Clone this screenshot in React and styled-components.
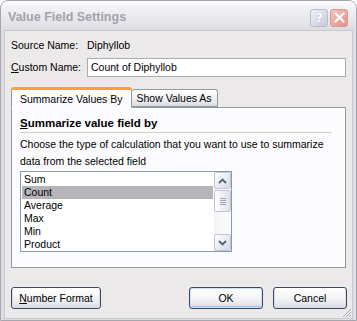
import React from "react";
import styled, { createGlobalStyle } from "styled-components";

const GlobalStyle = createGlobalStyle`
  html, body {
    margin: 0;
    padding: 0;
    background: #ffffff;
  }
  body {
    font-family: Tahoma, "Liberation Sans", Arial, sans-serif;
    font-size: 10.5px;
    color: #000;
  }
`;

const items = ["Sum", "Count", "Average", "Max", "Min", "Product"];

const App = () => {
  return (
    <>
      <GlobalStyle />
      <Window>
        <TitleBar>
          <Title>Value Field Settings</Title>
          <CaptionButtons>
            <CaptionButton>?</CaptionButton>
            <CaptionButton $close>
              <svg width="11" height="11" viewBox="0 0 11 11">
                <path d="M1.5 1.5 L9.5 9.5 M9.5 1.5 L1.5 9.5" stroke="#fff" strokeWidth="2.2" strokeLinecap="round" />
              </svg>
            </CaptionButton>
          </CaptionButtons>
        </TitleBar>
        <Body>
          <Row>
            <Label>Source Name:</Label>
            <Value>Diphyllob</Value>
          </Row>
          <Row>
            <Label><u>C</u>ustom Name:</Label>
            <Input>Count of Diphyllob</Input>
          </Row>
          <Tabs>
            <Tab $active>Summarize Values By</Tab>
            <Tab>Show Values As</Tab>
          </Tabs>
          <Panel>
            <Heading><u>S</u>ummarize value field by</Heading>
            <Description>
              Choose the type of calculation that you want to use to summarize
              data from the selected field
            </Description>
            <ListBox>
              <List>
                {items.map((it) => (
                  <Item key={it} $selected={it === "Count"}>{it}</Item>
                ))}
              </List>
              <ScrollBar>
                <ScrollButton>
                  <svg width="9" height="6" viewBox="0 0 9 6">
                    <path d="M1 5 L4.5 1.5 L8 5" stroke="#4d6185" strokeWidth="1.8" fill="none" />
                  </svg>
                </ScrollButton>
                <Track>
                  <Thumb>
                    <GripLine />
                    <GripLine />
                    <GripLine />
                    <GripLine />
                  </Thumb>
                </Track>
                <ScrollButton>
                  <svg width="9" height="6" viewBox="0 0 9 6">
                    <path d="M1 1 L4.5 4.5 L8 1" stroke="#4d6185" strokeWidth="1.8" fill="none" />
                  </svg>
                </ScrollButton>
              </ScrollBar>
            </ListBox>
          </Panel>
          <Footer>
            <Button $width="90px"><u>N</u>umber Format</Button>
            <Spacer />
            <Button $width="74px" $default>OK</Button>
            <Button $width="74px">Cancel</Button>
          </Footer>
          <Grip>
            <svg width="12" height="12" viewBox="0 0 12 12">
              <path d="M11 3 L3 11 M11 6 L6 11 M11 9 L9 11" stroke="#a8a8b0" strokeWidth="1" />
            </svg>
          </Grip>
        </Body>
      </Window>
    </>
  );
};

const Window = styled.div`
  width: 357px;
  height: 321px;
  box-sizing: border-box;
  display: flex;
  flex-direction: column;
  border: 1px solid #a7a6ae;
  border-radius: 8px 8px 0 0;
  background: #dedde3;
  overflow: hidden;
`;

const TitleBar = styled.div`
  height: 29px;
  flex-shrink: 0;
  display: flex;
  align-items: center;
  padding: 0 8px 0 7px;
  background: linear-gradient(#fdfdfe 0%, #f1f1f4 25%, #e6e6ea 70%, #dcdce1 100%);
`;

const Title = styled.div`
  flex: 1;
  font-family: "Liberation Sans", Arial, sans-serif;
  font-weight: bold;
  font-size: 12.5px;
  color: #a3a3ab;
  margin-top: 2px;
`;

const CaptionButtons = styled.div`
  display: flex;
  gap: 2px;
  margin-top: 4px;
`;

const CaptionButton = styled.div`
  width: 18px;
  height: 18px;
  box-sizing: border-box;
  border-radius: 3px;
  display: flex;
  align-items: center;
  justify-content: center;
  font-family: "DejaVu Sans", sans-serif;
  font-weight: bold;
  font-size: 13px;
  color: #fff;
  border: 1px solid ${(p) => (p.$close ? "#d59a95" : "#b9bccb")};
  background: ${(p) =>
    p.$close
      ? "linear-gradient(135deg, #f1c3bd, #e2928a)"
      : "linear-gradient(135deg, #f0f1f6, #c6c9d8)"};
  text-shadow: 0 0 1px #9ea2b8;
`;

const Body = styled.div`
  flex: 1;
  position: relative;
  margin: 0 3px 1px 3px;
  border: 1px solid #c9c8cd;
  background: #ece9ea;
  display: flex;
  flex-direction: column;
  padding: 3px 5px 0 6px;
`;

const Row = styled.div`
  display: flex;
  align-items: center;
  height: 22px;
`;

const Label = styled.div`
  width: 76px;
`;

const Value = styled.div``;

const Input = styled.div`
  flex: 1;
  height: 19px;
  box-sizing: border-box;
  border: 1px solid #a5acb5;
  background: #fff;
  padding: 0 3px;
  display: flex;
  align-items: center;
  margin-right: 1px;
`;

const Tabs = styled.div`
  display: flex;
  align-items: flex-end;
  margin-top: 9px;
  height: 21px;
  position: relative;
  z-index: 2;
  margin-bottom: -1px;
`;

const Tab = styled.div`
  box-sizing: border-box;
  height: ${(p) => (p.$active ? "21px" : "18px")};
  padding: 0 ${(p) => (p.$active ? "8px" : "5px")};
  display: flex;
  align-items: center;
  border: 1px solid #919b9c;
  border-bottom: ${(p) => (p.$active ? "1px solid #fcfcfe" : "1px solid #919b9c")};
  border-left: ${(p) => (p.$active ? "1px solid #919b9c" : "none")};
  border-top: ${(p) => (p.$active ? "3px solid #f2a33a" : "1px solid #919b9c")};
  border-radius: 3px 3px 0 0;
  background: ${(p) =>
    p.$active ? "#fcfcfe" : "linear-gradient(#ffffff, #ebebf0 70%, #d9d9e2)"};
  margin-bottom: ${(p) => (p.$active ? "0" : "1px")};
`;

const Panel = styled.div`
  box-sizing: border-box;
  height: 161px;
  margin: 0 1px 0 0;
  border: 1px solid #919b9c;
  background: #fcfcfe;
  padding: 8px 8px 0 8px;
  display: flex;
  flex-direction: column;
`;

const Heading = styled.div`
  font-weight: bold;
  font-size: 11.5px;
  line-height: 14px;
  padding-bottom: 2px;
  border-bottom: 1px solid #d0d0bf;
  margin-right: 5px;
`;

const Description = styled.div`
  margin-top: 3px;
  line-height: 17px;
`;

const ListBox = styled.div`
  width: 212px;
  height: 81px;
  box-sizing: border-box;
  border: 1px solid #7f9db9;
  background: #fff;
  display: flex;
  margin-top: 1px;
`;

const List = styled.div`
  flex: 1;
  padding: 1px 1px 0 1px;
`;

const Item = styled.div`
  height: 13px;
  line-height: 13px;
  padding-left: 2px;
  background: ${(p) => (p.$selected ? "#b5b4b9" : "transparent")};
`;

const ScrollBar = styled.div`
  width: 17px;
  display: flex;
  flex-direction: column;
  background: linear-gradient(90deg, #f3f3f6, #fdfdfe);
`;

const ScrollButton = styled.div`
  height: 17px;
  box-sizing: border-box;
  border: 1px solid #c3c4d2;
  border-radius: 2px;
  background: linear-gradient(135deg, #ffffff, #d7d8e4);
  display: flex;
  align-items: center;
  justify-content: center;
`;

const Track = styled.div`
  flex: 1;
  padding-top: 1px;
`;

const Thumb = styled.div`
  height: 22px;
  box-sizing: border-box;
  border: 1px solid #c3c4d2;
  border-radius: 2px;
  background: linear-gradient(90deg, #ffffff, #dfe0ea);
  display: flex;
  flex-direction: column;
  align-items: center;
  justify-content: center;
  gap: 1px;
`;

const GripLine = styled.div`
  width: 6px;
  height: 1px;
  background: #a0a2b5;
`;

const Footer = styled.div`
  display: flex;
  align-items: center;
  gap: 10px;
  margin-top: 19px;
`;

const Spacer = styled.div`
  flex: 1;
`;

const Button = styled.div`
  width: ${(p) => p.$width};
  height: 22px;
  box-sizing: border-box;
  border: 1px solid #3c4a6a;
  border-radius: 3px;
  display: flex;
  align-items: center;
  justify-content: center;
  background: linear-gradient(#ffffff 0%, #f5f5f8 50%, #dcdde6 100%);
  box-shadow: ${(p) =>
    p.$default
      ? "inset 0 0 0 1px #cde0f8, inset 0 -1px 0 1px #a9c3ea"
      : "inset 0 -1px 0 1px #dadbe4"};
`;

const Grip = styled.div`
  position: absolute;
  right: 0;
  bottom: 0;
  width: 12px;
  height: 12px;
`;

export default App;
